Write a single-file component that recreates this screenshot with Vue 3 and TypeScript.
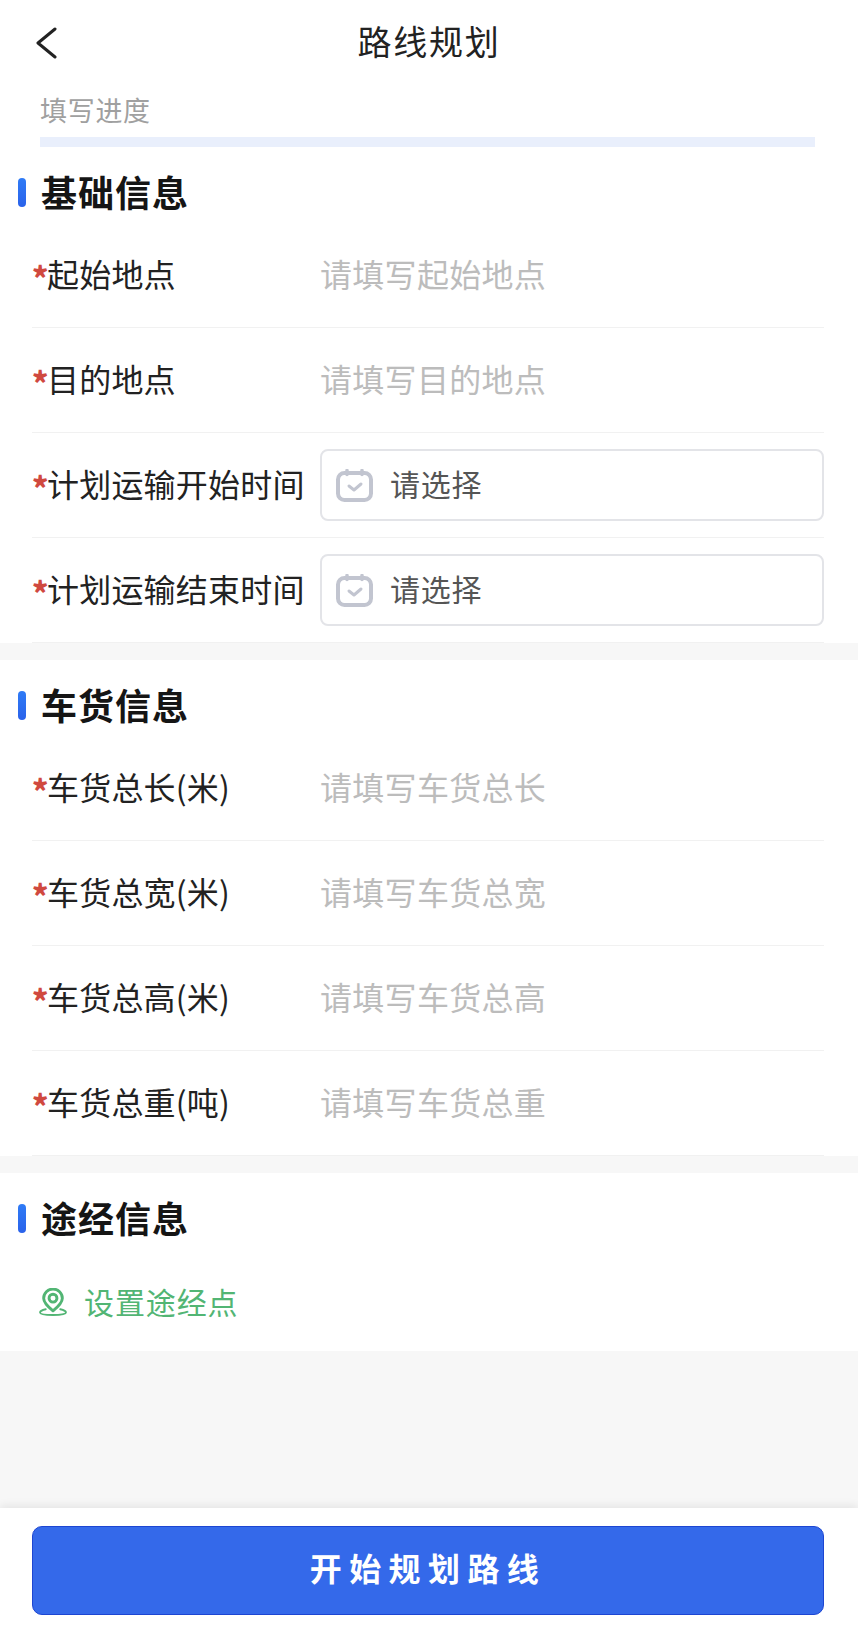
<script setup lang="ts">
interface Field {
  label: string
  placeholder: string
  type?: 'date'
}
interface Section {
  title: string
  fields: Field[]
}

const sections: Section[] = [
  {
    title: '基础信息',
    fields: [
      { label: '起始地点', placeholder: '请填写起始地点' },
      { label: '目的地点', placeholder: '请填写目的地点' },
      { label: '计划运输开始时间', placeholder: '请选择', type: 'date' },
      { label: '计划运输结束时间', placeholder: '请选择', type: 'date' },
    ],
  },
  {
    title: '车货信息',
    fields: [
      { label: '车货总长(米)', placeholder: '请填写车货总长' },
      { label: '车货总宽(米)', placeholder: '请填写车货总宽' },
      { label: '车货总高(米)', placeholder: '请填写车货总高' },
      { label: '车货总重(吨)', placeholder: '请填写车货总重' },
    ],
  },
]
</script>

<template>
  <div class="page">
    <header class="nav">
      <svg class="back" viewBox="0 0 22 32" fill="none">
        <path d="M20 2 L3 16 L20 30" stroke="#222" stroke-width="3" stroke-linecap="round" stroke-linejoin="round" />
      </svg>
      <h1 class="nav-title">路线规划</h1>
    </header>

    <div class="progress">
      <div class="progress-label">填写进度</div>
      <div class="progress-bar"></div>
    </div>

    <main class="content">
      <section v-for="section in sections" :key="section.title" class="section">
        <h2 class="section-title"><i class="accent"></i>{{ section.title }}</h2>
        <div v-for="field in section.fields" :key="field.label" class="row">
          <label class="label"><span class="star">*</span>{{ field.label }}</label>
          <div v-if="field.type === 'date'" class="date-box">
            <svg class="cal" viewBox="0 0 37 33" fill="none">
              <rect x="2" y="4" width="33" height="27" rx="6.5" stroke="#c2c5d0" stroke-width="4" />
              <path d="M11 1.500v4M26 1.500v4" stroke="#c2c5d0" stroke-width="3.500" stroke-linecap="round" />
              <path d="M13 17l5 4 7-6" stroke="#c2c5d0" stroke-width="3" stroke-linecap="round" stroke-linejoin="round" />
            </svg>
            <span class="date-text">{{ field.placeholder }}</span>
          </div>
          <div v-else class="placeholder">{{ field.placeholder }}</div>
        </div>
      </section>

      <section class="section last">
        <h2 class="section-title"><i class="accent"></i>途经信息</h2>
        <div class="waypoint">
          <svg class="pin" viewBox="0 0 27 27" fill="none">
            <path d="M13.5 22 C8 17.5 4.5 14 4.5 9.8 A9 8.8 0 0 1 22.5 9.8 C22.5 14 19 17.5 13.5 22 Z" stroke="#52b574" stroke-width="2.800" stroke-linejoin="round" />
            <circle cx="13.5" cy="9.8" r="3.8" stroke="#52b574" stroke-width="2.800" />
            <path d="M6.5 20.5 C3 21.3 1 22.4 1 23.6 C1 25.2 6.5 26 13.5 26 C20.5 26 26 25.2 26 23.6 C26 22.4 24 21.3 20.5 20.5" stroke="#52b574" stroke-width="1.800" stroke-linecap="round" />
          </svg>
          <span>设置途经点</span>
        </div>
      </section>
    </main>

    <footer class="footer">
      <button class="submit" type="button">开始规划路线</button>
    </footer>
  </div>
</template>

<style>
html,
body {
  margin: 0;
  padding: 0;
  background: #fff;
}
</style>

<style scoped>
.page {
  display: flex;
  flex-direction: column;
  height: 1628px;
  font-family: "Noto Sans CJK SC", "Noto Sans", sans-serif;
  background: #fff;
  box-sizing: border-box;
  overflow: hidden;
}
.nav {
  flex: none;
  height: 86px;
  box-sizing: border-box;
  padding-bottom: 4px;
  position: relative;
  display: flex;
  align-items: center;
  justify-content: center;
}
.back {
  position: absolute;
  left: 35px;
  top: 27px;
  width: 22px;
  height: 32px;
}
.nav-title {
  margin: 0;
  font-size: 34px;
  line-height: 40px;
  font-weight: 400;
  color: #222;
  letter-spacing: 1.800px;
}
.progress {
  flex: none;
  height: 61px;
  box-sizing: border-box;
  padding: 0 43px 0 40px;
  display: flex;
  flex-direction: column;
}
.progress-label {
  font-size: 27px;
  line-height: 48px;
  height: 51px;
  color: #a0a0a0;
  letter-spacing: 0.7px;
}
.progress-bar {
  height: 10px;
  background: #e9effc;
}
.content {
  flex: 1;
  background: #f7f7f7;
  display: flex;
  flex-direction: column;
  gap: 17px;
}
.section {
  background: #fff;
  padding: 0 34px 0 32px;
}
.section-title {
  margin: 0;
  height: 76px;
  box-sizing: border-box;
  padding-top: 24px;
  position: relative;
  padding-left: 9px;
  font-size: 36px;
  line-height: 40px;
  font-weight: 700;
  color: #151515;
  letter-spacing: 1px;
}
.accent {
  position: absolute;
  left: -14px;
  top: 31px;
  width: 8px;
  height: 29px;
  border-radius: 4px;
  background: linear-gradient(180deg, #2f7bf6, #2a62ea);
}
.row {
  height: 105px;
  box-sizing: border-box;
  border-bottom: 1.500px solid #f1f1f1;
  display: flex;
  align-items: center;
}
.label {
  width: 288px;
  flex: none;
  display: flex;
  align-items: center;
  font-size: 32px;
  line-height: 40px;
  letter-spacing: 0.200px;
  padding-bottom: 4px;
  color: #222;
  white-space: nowrap;
}
.star {
  width: 15px;
  flex: none;
  font-size: 31px;
  line-height: 40px;
  font-weight: 900;
  color: #d0493f;
  text-align: center;
  position: relative;
  top: 4px;
}
.placeholder {
  font-size: 32px;
  line-height: 40px;
  letter-spacing: 0.300px;
  padding-bottom: 4px;
  color: #bcbcbc;
}
.date-box {
  flex: 1;
  height: 72px;
  box-sizing: border-box;
  border: 2px solid #e3e4e8;
  border-radius: 8px;
  display: flex;
  align-items: center;
  padding-left: 14px;
}
.cal {
  width: 37px;
  height: 33px;
  flex: none;
}
.date-text {
  margin-left: 17px;
  font-size: 30px;
  line-height: 40px;
  padding-bottom: 4px;
  color: #555;
  letter-spacing: 0.800px;
}
.last {
  padding-bottom: 0;
}
.waypoint {
  height: 102px;
  box-sizing: border-box;
  padding: 2px 0 0 7px;
  display: flex;
  align-items: center;
  gap: 17px;
  font-size: 30px;
  line-height: 40px;
  color: #52b574;
  letter-spacing: 0.900px;
}
.pin {
  width: 28px;
  height: 28px;
  flex: none;
  position: relative;
  top: 1px;
}
.footer {
  flex: none;
  height: 120px;
  box-sizing: border-box;
  padding: 18px 34px 13px 32px;
  background: #fff;
  box-shadow: 0 -3px 8px rgba(0, 0, 0, 0.07);
  position: relative;
}
.submit {
  display: block;
  width: 100%;
  height: 89px;
  border: 1px solid #1d46d2;
  border-radius: 10px;
  background: #3469ea;
  color: #fff;
  font-family: inherit;
  font-size: 32px;
  line-height: 40px;
  font-weight: 700;
  letter-spacing: 7.400px;
  padding: 0 0 7px;
}
</style>
